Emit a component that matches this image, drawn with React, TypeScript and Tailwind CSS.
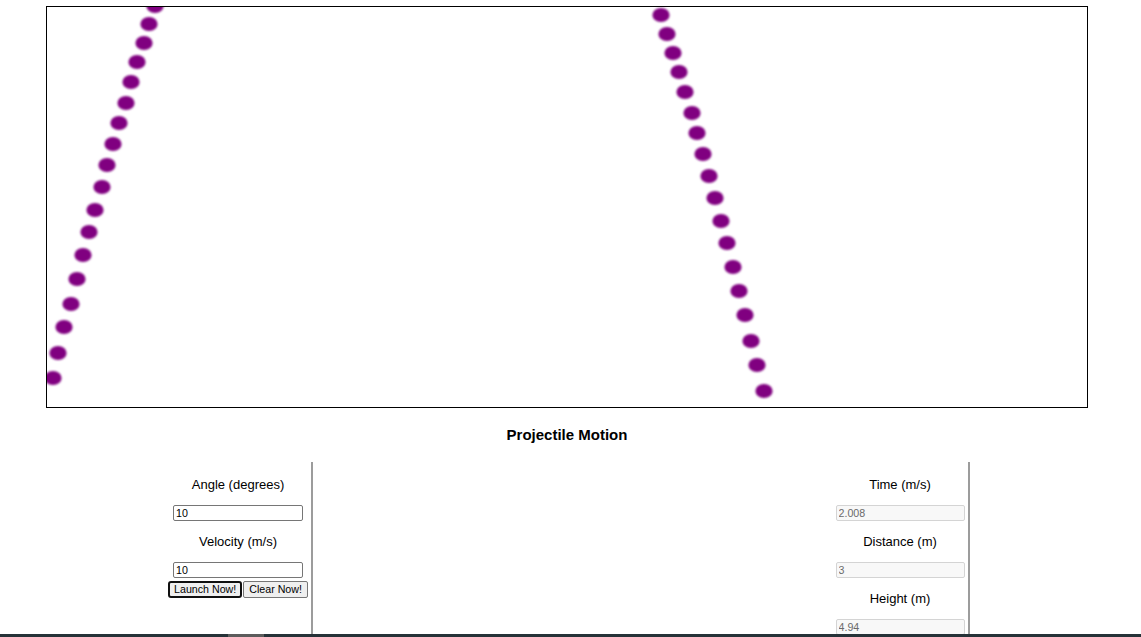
import React from "react";

const LEFT: [number, number][] = [
  [53, 378], [58, 353], [64, 327], [71, 304], [77, 279], [83, 255], [89, 232], [95, 210],
  [102, 187], [107, 165], [113, 144], [119, 123], [126, 103], [131, 82], [137, 62], [144, 43],
  [149, 24], [155, 6],
];
const RIGHT: [number, number][] = [
  [661, 15], [667, 34], [673, 53], [679, 72], [685, 92], [692, 113], [697, 133], [703, 154],
  [709, 176], [715, 198], [721, 221], [727, 243], [733, 267], [739, 291], [745, 315], [751, 341],
  [757, 365], [764, 391],
];

function Field({ label, value, disabled, first }: { label: string; value: string; disabled?: boolean; first?: boolean }) {
  return (
    <>
      <div className={`${first ? "" : "mt-[13px]"} text-[13px] leading-[15px]`}>{label}</div>
      <input
        defaultValue={value}
        disabled={disabled}
        className={
          disabled
            ? "mt-[13px] block w-[129px] h-[16px] border border-[#d4d4d4] bg-[#f8f8f8] text-[#6a6a6a] rounded-[2px] px-[2px] text-[10.67px] leading-none"
            : "mt-[13px] block w-[130px] h-[16px] border border-[#767676] bg-white text-black rounded-[2px] px-[2px] text-[10.67px] leading-none"
        }
      />
    </>
  );
}

export default function App() {
  const dots = [...LEFT, ...RIGHT];
  return (
    <div className="min-h-screen bg-white text-black font-['Liberation_Sans',Arial,sans-serif]">
      <div className="ml-[46px] pt-[6px] w-[1042px]">
        <div className="border border-black w-[1042px] h-[402px] bg-white">
          <svg width="1040" height="400" viewBox="47 7 1040 400" className="block">
            <defs>
              <filter id="soft" x="-10%" y="-10%" width="120%" height="120%">
                <feGaussianBlur stdDeviation="1" />
              </filter>
            </defs>
            <g fill="#800080" filter="url(#soft)">
              {dots.map(([x, y], i) => (
                <ellipse key={i} cx={x} cy={y} rx={8.6} ry={7} />
              ))}
            </g>
          </svg>
        </div>
        <h1 className="mt-[18px] text-center text-[15px] leading-[18px] font-bold">Projectile Motion</h1>
      </div>

      <div className="mt-[18px] flex">
        <div className="ml-[165px] w-[148px] border-r-2 border-[#9c9c9c] flex flex-col items-center pt-[15px] pb-[60px]">
          <Field first label="Angle (degrees)" value="10" />
          <Field label="Velocity (m/s)" value="10" />
          <div className="mt-[3px] flex gap-[1px]">
            <button className="h-[17px] px-[4px] border-2 border-[#101010] rounded-[3px] bg-[#efefef] text-[10.67px] leading-[13px] text-black">
              Launch Now!
            </button>
            <button className="h-[17px] px-[5px] border border-[#767676] rounded-[2px] bg-[#efefef] text-[10.67px] leading-[13px] text-black">
              Clear Now!
            </button>
          </div>
        </div>

        <div className="ml-[519px] w-[138px] border-r-2 border-[#9c9c9c] flex flex-col items-center pt-[15px] pb-[40px]">
          <Field first label="Time (m/s)" value="2.008" disabled />
          <Field label="Distance (m)" value="3" disabled />
          <Field label="Height (m)" value="4.94" disabled />
        </div>
      </div>

      <div className="fixed bottom-0 left-0 right-0 h-[3px] bg-[#263238]">
        <div className="ml-[228px] w-[36px] h-full bg-[#5c5c5c]" />
      </div>
    </div>
  );
}
